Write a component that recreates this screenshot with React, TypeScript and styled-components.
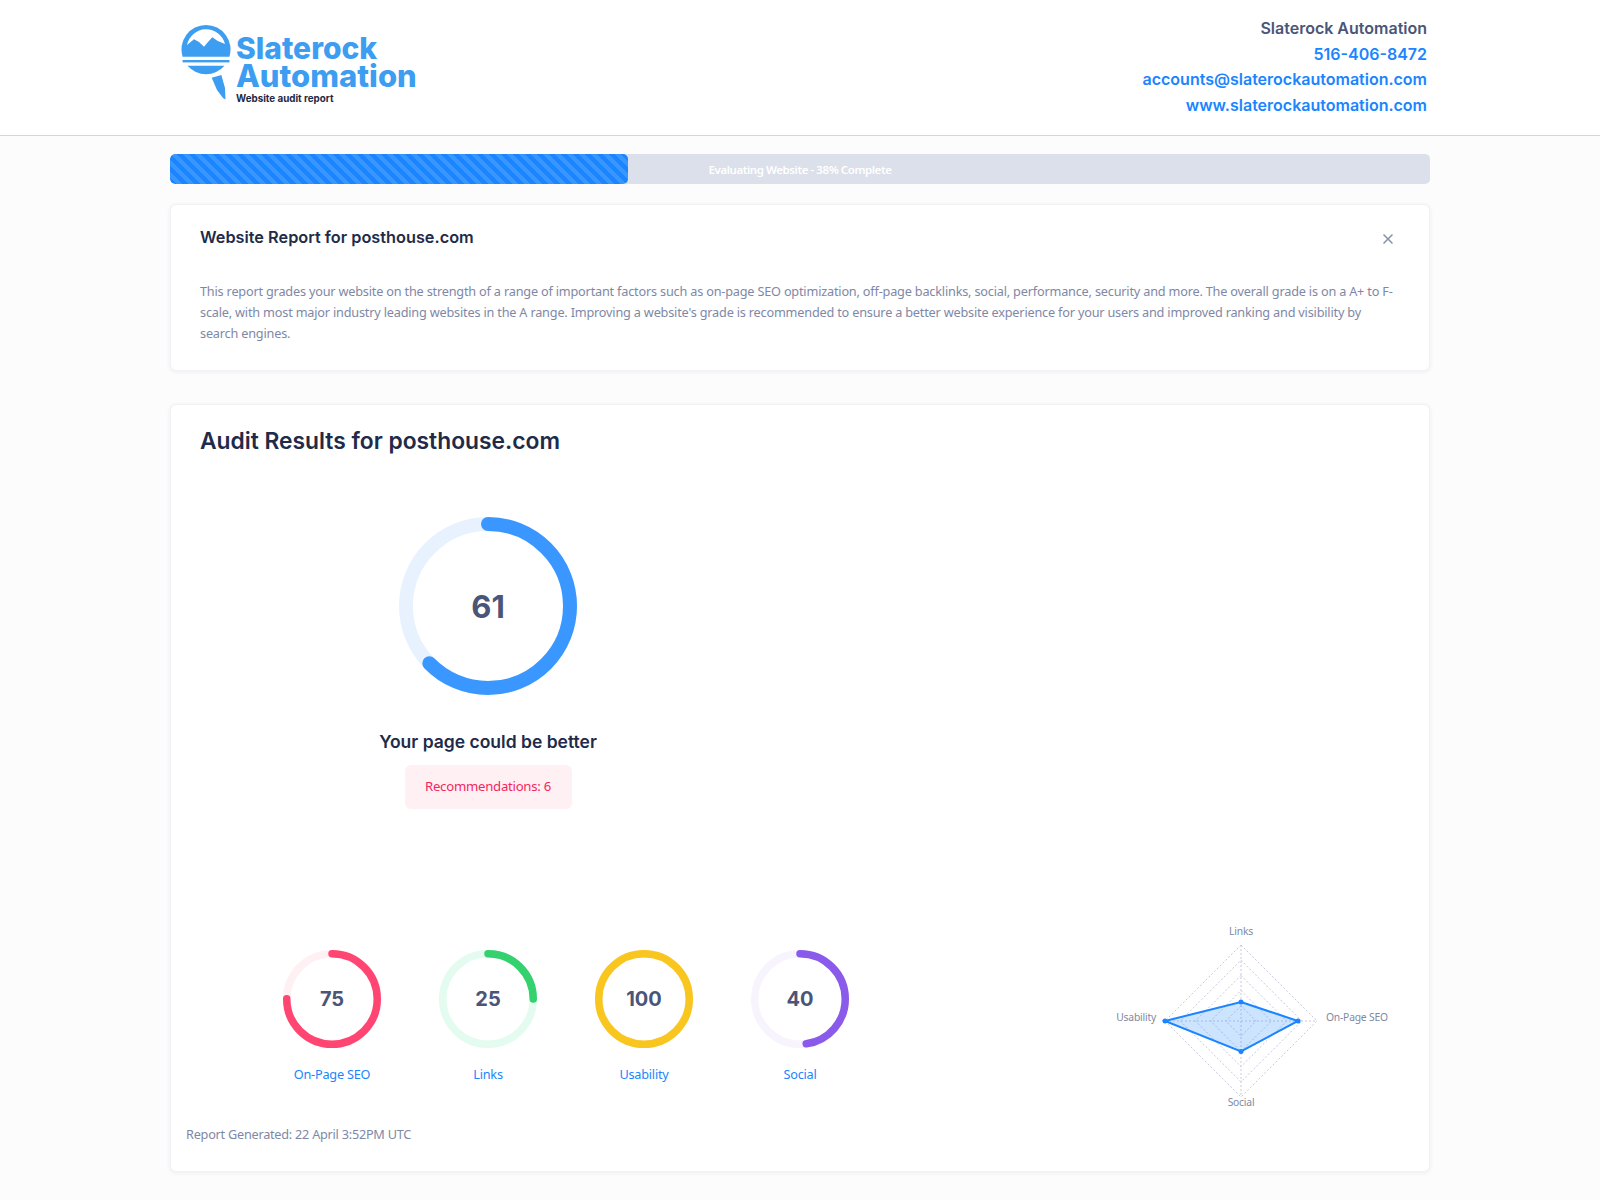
import React from "react";
import styled, { createGlobalStyle } from "styled-components";
import { X } from "lucide-react";

const GlobalStyle = createGlobalStyle`
  body {
    margin: 0;
    background: #fcfcfd;
    font-family: "Noto Sans", "Liberation Sans", sans-serif;
    color: #7e88a6;
  }
`;

const Header = styled.header`
  height: 136px;
  box-sizing: border-box;
  background: #fff;
  border-bottom: 1px solid #d3d5d9;
`;

const HeaderInner = styled.div`
  width: 1260px;
  margin: 0 auto;
  display: flex;
  justify-content: space-between;
`;

const Logo = styled.div`
  display: flex;
  margin: 22px 0 0 9px;
  gap: 3px;
`;

const LogoText = styled.div`
  font-family: Inter, sans-serif;
  padding-top: 12px;
`;

const LogoName = styled.div<{ $size: number }>`
  font-size: ${(p) => p.$size}px;
  font-weight: 800;
  line-height: 28px;
  color: #3d9df0;
`;

const LogoSub = styled.div`
  font-size: 9.8px;
  font-weight: 700;
  line-height: 12px;
  margin-top: 3px;
  color: #1e2a45;
`;

const Contact = styled.div`
  padding: 16px 3px 0 0;
  text-align: right;
  font-family: Inter, sans-serif;
  font-size: 16px;
  font-weight: 600;
  line-height: 25.6px;
`;

const ContactLine = styled.div<{ $muted?: boolean }>`
  color: ${(p) => (p.$muted ? "#4a5578" : "#1a85ff")};
`;

const Main = styled.main`
  width: 1260px;
  margin: 0 auto;
  padding: 18px 0 28px;
`;

const Progress = styled.div`
  position: relative;
  height: 30px;
  border-radius: 5px;
  background: #dce0ea;
  overflow: hidden;
  margin-bottom: 20px;
`;

const ProgressFill = styled.div`
  height: 100%;
  border-radius: 5px;
  background: repeating-linear-gradient(45deg, #1a85ff 0 4.25px, #3a96ff 4.25px 8.5px);
`;

const ProgressLabel = styled.div`
  position: absolute;
  inset: 0;
  display: flex;
  align-items: center;
  justify-content: center;
  color: #fff;
  font-size: 11.5px;
  font-weight: 600;
  letter-spacing: -0.43px;
`;

const Card = styled.section`
  background: #fff;
  border: 1px solid #f1f2f5;
  border-radius: 6px;
  box-shadow: 0 1px 4px rgba(30, 40, 70, 0.07);
  box-sizing: border-box;
`;

const IntroCard = styled(Card)`
  height: 167px;
  padding: 20px 29px;
  margin-bottom: 33px;
`;

const IntroHead = styled.div`
  display: flex;
  justify-content: space-between;
  align-items: center;
  margin-bottom: 32px;
`;

const IntroTitle = styled.h2`
  margin: 0;
  font-family: Inter, sans-serif;
  font-size: 16.3px;
  font-weight: 600;
  line-height: 24px;
  color: #212b49;
`;

const Close = styled.span`
  display: flex;
  margin: 4px 4px 0 0;
  color: #8a94ab;
`;

const Paragraph = styled.p`
  margin: 0;
  font-size: 12.7px;
  letter-spacing: -0.19px;
  line-height: 20.8px;
  color: #7e88a6;
`;

const ResultsCard = styled(Card)`
  height: 768px;
  padding: 20px 0 0;
  display: flex;
  flex-direction: column;
`;

const ResultsTitle = styled.h1`
  margin: 0 0 0 29px;
  font-family: Inter, sans-serif;
  font-size: 22.8px;
  font-weight: 600;
  line-height: 32px;
  color: #212b49;
`;

const Overview = styled.div`
  width: 576px;
  margin: 60px 0 0 29px;
  display: flex;
  flex-direction: column;
  align-items: center;
`;

const GaugeWrap = styled.div<{ $size: number }>`
  position: relative;
  width: ${(p) => p.$size}px;
  height: ${(p) => p.$size}px;
`;

const GaugeValue = styled.div<{ $big?: boolean }>`
  position: absolute;
  inset: 0;
  display: flex;
  align-items: center;
  justify-content: center;
  font-family: Inter, sans-serif;
  font-weight: 700;
  font-size: ${(p) => (p.$big ? "31px" : "20px")};
  color: #4a5578;
`;

const Verdict = styled.div`
  margin-top: 34px;
  font-family: Inter, sans-serif;
  font-size: 17.5px;
  font-weight: 600;
  line-height: 26px;
  color: #212b49;
`;

const Badge = styled.div`
  margin-top: 10px;
  width: 167px;
  height: 44px;
  display: flex;
  align-items: center;
  justify-content: center;
  border-radius: 6px;
  background: #fff0f4;
  color: #f5265e;
  font-size: 13.2px;
  letter-spacing: -0.27px;
  padding-bottom: 2px;
  box-sizing: border-box;
`;

const Bottom = styled.div`
  margin-top: 100px;
  display: flex;
  justify-content: space-between;
  padding-right: 24px;
`;

const Scores = styled.div`
  margin: 41px 0 0 83px;
  display: flex;
`;

const Score = styled.div`
  width: 156px;
  display: flex;
  flex-direction: column;
  align-items: center;
`;

const ScoreLabel = styled.div`
  margin-top: 16px;
  font-size: 12.7px;
  letter-spacing: -0.22px;
  line-height: 20px;
  color: #1a85ff;
`;

const Generated = styled.div`
  margin: 40px 0 0 15px;
  font-size: 12.7px;
  letter-spacing: -0.24px;
  line-height: 20px;
  color: #7e88a6;
`;

const RadarWrap = styled.div`
  margin-top: 2px;
`;

const RadarLabel = styled.text`
  font-family: "Noto Sans", sans-serif;
  font-size: 10.3px;
  letter-spacing: -0.2px;
  fill: #8089a3;
`;

const Gauge = ({ size, stroke, value, arc, color, track, big }: {
  size: number; stroke: number; value: number; arc?: number; color: string; track: string; big?: boolean;
}) => {
  const r = (size - stroke) / 2;
  const c = 2 * Math.PI * r;
  const shown = arc ?? value;
  return (
    <GaugeWrap $size={size}>
      <svg width={size} height={size}>
        <circle cx={size / 2} cy={size / 2} r={r} fill="none" stroke={track} strokeWidth={stroke} />
        <circle
          cx={size / 2}
          cy={size / 2}
          r={r}
          fill="none"
          stroke={color}
          strokeWidth={stroke}
          strokeLinecap="round"
          strokeDasharray={`${(c * shown) / 100} ${c}`}
          transform={`rotate(-90 ${size / 2} ${size / 2})`}
        />
      </svg>
      <GaugeValue $big={big}>{value}</GaugeValue>
    </GaugeWrap>
  );
};

const LogoMark = () => (
  <svg width="54" height="80" viewBox="0 0 54 80" fill="#3d9df0">
    <path d="M3.6 34.7A24.5 24.5 0 1 1 50.4 34.7Z" />
    <path
      fill="#fff"
      d="M8 23L15 17.3L20 20L25 24.7L29 20L33.3 15.3L38.3 18.7L46 22A19.5 19.5 0 0 0 8 23Z"
    />
    <rect x="3.6" y="38" width="46.8" height="2.4" />
    <path d="M8.5 43.7H45.5A24.5 24.5 0 0 1 8.5 43.7Z" />
    <path d="M32.7 55.7L42.3 53L46 66L46.5 77.5L44 76L38 68Z" />
  </svg>
);

const Radar = () => {
  const cx = 156;
  const cy = 110;
  const R = 76;
  const rings = [0.2, 0.4, 0.6, 0.8, 1];
  const points = [
    [cx, cy - R * 0.25],
    [cx + R * 0.75, cy],
    [cx, cy + R * 0.4],
    [cx - R, cy],
  ];
  return (
    <svg width="320" height="210">
      {rings.map((k) => (
        <polygon
          key={k}
          points={`${cx},${cy - R * k} ${cx + R * k},${cy} ${cx},${cy + R * k} ${cx - R * k},${cy}`}
          fill="none"
          stroke="#c6cae0"
          strokeWidth="1"
          strokeDasharray="2 2"
        />
      ))}
      <line x1={cx} y1={cy - R} x2={cx} y2={cy + R} stroke="#c6cae0" strokeDasharray="2 2" />
      <line x1={cx - R} y1={cy} x2={cx + R} y2={cy} stroke="#c6cae0" strokeDasharray="2 2" />
      <polygon
        points={points.map((p) => p.join(",")).join(" ")}
        fill="rgba(26,133,255,0.22)"
        stroke="#1a85ff"
        strokeWidth="2"
      />
      {points.map((p) => (
        <circle key={p.join()} cx={p[0]} cy={p[1]} r="2.5" fill="#1a85ff" />
      ))}
      <RadarLabel x={cx} y={cy - 86} textAnchor="middle">Links</RadarLabel>
      <RadarLabel x={cx + 85} y={cy} textAnchor="start">On-Page SEO</RadarLabel>
      <RadarLabel x={cx} y={cy + 85} textAnchor="middle">Social</RadarLabel>
      <RadarLabel x={cx - 85} y={cy} textAnchor="end">Usability</RadarLabel>
    </svg>
  );
};

const scores = [
  { label: "On-Page SEO", value: 75, color: "#ff4572", track: "#fff0f4" },
  { label: "Links", value: 25, color: "#34d16e", track: "#e3fcef" },
  { label: "Usability", value: 100, color: "#f9c620", track: "#fff8e1" },
  { label: "Social", value: 40, arc: 47.7, color: "#8a5aea", track: "#f7f4fe" },
];

export default function App() {
  return (
    <>
      <GlobalStyle />
      <Header>
        <HeaderInner>
          <Logo>
            <LogoMark />
            <LogoText>
              <LogoName $size={30}>Slaterock</LogoName>
              <LogoName $size={31}>Automation</LogoName>
              <LogoSub>Website audit report</LogoSub>
            </LogoText>
          </Logo>
          <Contact>
            <ContactLine $muted>Slaterock Automation</ContactLine>
            <ContactLine>516-406-8472</ContactLine>
            <ContactLine>accounts@slaterockautomation.com</ContactLine>
            <ContactLine>www.slaterockautomation.com</ContactLine>
          </Contact>
        </HeaderInner>
      </Header>
      <Main>
        <Progress>
          <ProgressFill style={{ width: "36.35%" }} />
          <ProgressLabel>Evaluating Website - 38% Complete</ProgressLabel>
        </Progress>
        <IntroCard>
          <IntroHead>
            <IntroTitle>Website Report for posthouse.com</IntroTitle>
            <Close><X size={16} strokeWidth={2.5} /></Close>
          </IntroHead>
          <Paragraph>
            This report grades your website on the strength of a range of important factors such as on-page SEO
            optimization, off-page backlinks, social, performance, security and more. The overall grade is on a A+ to F-scale,
            with most major industry leading websites in the A range. Improving a website's grade is recommended to ensure a
            better website experience for your users and improved ranking and visibility by search engines.
          </Paragraph>
        </IntroCard>
        <ResultsCard>
          <ResultsTitle>Audit Results for posthouse.com</ResultsTitle>
          <Overview>
            <Gauge size={178} stroke={14} value={61} arc={62.6} color="#3a97ff" track="#e8f2ff" big />
            <Verdict>Your page could be better</Verdict>
            <Badge>Recommendations: 6</Badge>
          </Overview>
          <Bottom>
            <div>
              <Scores>
                {scores.map((s) => (
                  <Score key={s.label}>
                    <Gauge size={98} stroke={7.5} value={s.value} arc={s.arc} color={s.color} track={s.track} />
                    <ScoreLabel>{s.label}</ScoreLabel>
                  </Score>
                ))}
              </Scores>
              <Generated>Report Generated: 22 April 3:52PM UTC</Generated>
            </div>
            <RadarWrap>
              <Radar />
            </RadarWrap>
          </Bottom>
        </ResultsCard>
      </Main>
    </>
  );
}
